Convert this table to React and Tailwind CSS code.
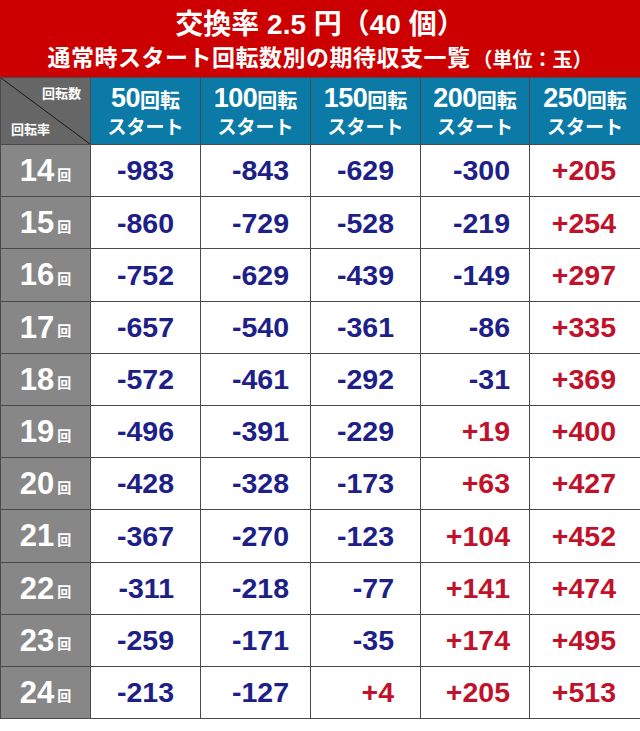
const FONT = { fontFamily: '"Liberation Sans", "Noto Sans CJK JP", sans-serif' };

const cols = ['50', '100', '150', '200', '250'];
const padR = ['pr-[26px]', 'pr-[21px]', 'pr-[26px]', 'pr-[19px]', 'pr-[24px]'];

const rows = [
  ['14', '-983', '-843', '-629', '-300', '+205'],
  ['15', '-860', '-729', '-528', '-219', '+254'],
  ['16', '-752', '-629', '-439', '-149', '+297'],
  ['17', '-657', '-540', '-361', '-86', '+335'],
  ['18', '-572', '-461', '-292', '-31', '+369'],
  ['19', '-496', '-391', '-229', '+19', '+400'],
  ['20', '-428', '-328', '-173', '+63', '+427'],
  ['21', '-367', '-270', '-123', '+104', '+452'],
  ['22', '-311', '-218', '-77', '+141', '+474'],
  ['23', '-259', '-171', '-35', '+174', '+495'],
  ['24', '-213', '-127', '+4', '+205', '+513'],
];

function CornerCell() {
  return (
    <div className="relative h-[66px] bg-[#666666] text-white font-bold text-[13px] leading-none">
      <svg className="absolute inset-0 w-full h-full" viewBox="0 0 89 66" preserveAspectRatio="none">
        <line x1="0" y1="0" x2="89" y2="66" stroke="#1a1a1a" strokeWidth="1" />
      </svg>
      <div className="relative flex flex-col justify-between h-full pt-[9px] pb-[8px]">
        <span className="self-end pr-[9px]">回転数</span>
        <span className="pl-[10px]">回転率</span>
      </div>
    </div>
  );
}

export default function App() {
  return (
    <div className="w-[640px] h-[731px] bg-white" style={FONT}>
      <div className="h-[77px] bg-[#cc0000] flex flex-col items-center justify-center text-white font-bold leading-none pt-[4px]">
        <div className="text-[28px]">交換率 2.5 円（40 個）</div>
        <div className="mt-[8px] text-[23px] flex items-end">
          <span className="tracking-[0.5px]">通常時スタート回転数別の期待収支一覧</span>
          <span className="text-[20px] ml-[2px]">（単位：玉）</span>
        </div>
      </div>
      <div className="grid grid-cols-[89px_109px_109px_109px_108px_110px] gap-px bg-[#4a4a4a] border-l border-t border-b border-[#4a4a4a]">
        <CornerCell />
        {cols.map((c) => (
          <div key={c} className="h-[66px] bg-[#0b7aa6] text-white font-bold flex flex-col items-center justify-center leading-none">
            <div className="flex items-end">
              <span className="text-[27px] tracking-[-0.5px]">{c}</span>
              <span className="text-[20px] mb-[1px]">回転</span>
            </div>
            <div className="text-[19px] mt-[6px]">スタート</div>
          </div>
        ))}
        {rows.map((r) => (
          <div key={r[0]} className="contents">
            <div className="h-[51.2px] bg-[#878787] text-white font-bold flex items-center justify-center">
              <span className="text-[31px] leading-none">{r[0]}</span>
              <span className="text-[14px] leading-none ml-[3px] mt-[8px]">回</span>
            </div>
            {r.slice(1).map((v, i) => (
              <div
                key={i}
                className={`h-[51.2px] bg-white flex items-center justify-end font-bold text-[28.5px] leading-none ${padR[i]} ${v.startsWith('+') ? 'text-[#c0122a]' : 'text-[#1d2087]'}`}
              >
                {v}
              </div>
            ))}
          </div>
        ))}
      </div>
    </div>
  );
}
